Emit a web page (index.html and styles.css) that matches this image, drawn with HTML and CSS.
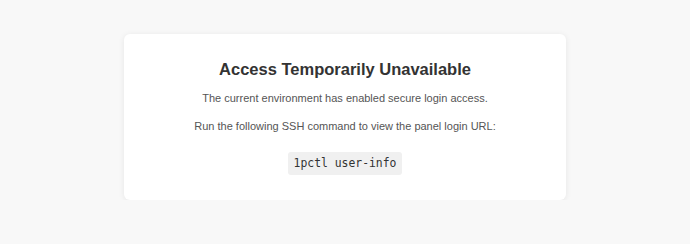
FILE: index.html
```html
<!DOCTYPE html>
<html>
<head>
<meta charset="utf-8">
<link rel="stylesheet" href="styles.css">
</head>
<body>
<div class="card">
  <h1 class="title">Access Temporarily Unavailable</h1>
  <p class="text">The current environment has enabled secure login access.</p>
  <p class="text">Run the following SSH command to view the panel login URL:</p>
  <code class="cmd">1pctl user-info</code>
</div>
</body>
</html>
```
FILE: styles.css
```css
html, body {
  margin: 0;
  padding: 0;
}
body {
  background: #f8f8f8;
  font-family: "Liberation Sans", Arial, sans-serif;
  display: flex;
  justify-content: center;
  padding-top: 34px;
}
.card {
  width: 442px;
  box-sizing: border-box;
  background: #fff;
  border-radius: 6px;
  box-shadow: 0 1px 6px rgba(0,0,0,0.08);
  padding: 25px 20px 25px;
  text-align: center;
  display: flex;
  flex-direction: column;
  align-items: center;
}
.title {
  margin: 0 0 12px;
  font-size: 16.5px;
  line-height: 20px;
  font-weight: bold;
  color: #333;
}
.text {
  margin: 0 0 14px;
  font-size: 11px;
  line-height: 14px;
  color: #555;
}
.text + .cmd {
  margin-top: 5px;
}
.cmd {
  font-family: "DejaVu Sans Mono", monospace;
  font-size: 11.4px;
  line-height: 13px;
  color: #333;
  background: #f0f0f0;
  border-radius: 3px;
  padding: 5px 5.5px;
}
```
